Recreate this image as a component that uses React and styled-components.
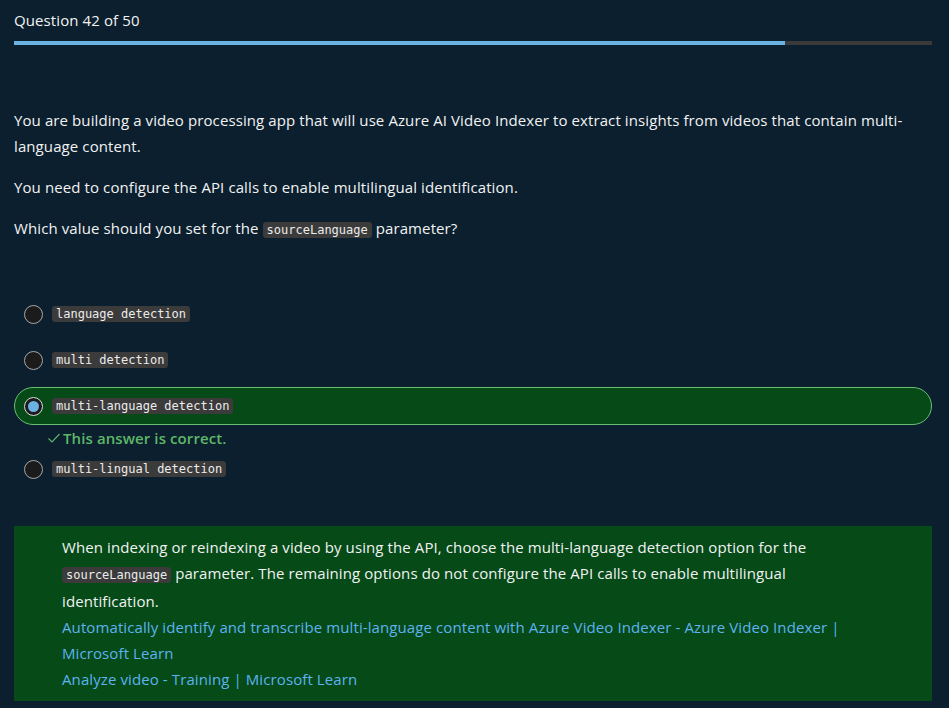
import styled, { createGlobalStyle } from "styled-components";

const GlobalStyle = createGlobalStyle`
  html, body {
    margin: 0;
    padding: 0;
    background: #0b1f2e;
  }
  body {
    font-family: "Open Sans", "Noto Sans", sans-serif;
    color: #f2f2f2;
    letter-spacing: 0.1px;
  }
`;

const Page = styled.div`
  padding: 0 17px 8px 14px;
`;

const Header = styled.div`
  font-size: 15px;
  line-height: 20px;
  padding-top: 10px;
`;

const Progress = styled.div`
  height: 4px;
  margin-top: 11px;
  background: #3a3a3a;
`;

const ProgressFill = styled.div`
  height: 100%;
  background: #6cb1e3;
`;

const Question = styled.div`
  margin-top: 62px;
  font-size: 15px;
  line-height: 26px;

  p {
    margin: 0 0 15px;
  }
`;

const Code = styled.code`
  font-family: "DejaVu Sans Mono", Consolas, monospace;
  font-size: 12px;
  letter-spacing: 0;
  background: #3b3b3b;
  color: #ececec;
  border-radius: 3px;
  padding: 1px 4px;
`;

const Options = styled.div`
  margin-top: 52px;
  display: flex;
  flex-direction: column;
`;

const Option = styled.label`
  display: flex;
  align-items: center;
  gap: 9px;
  height: 38px;
  box-sizing: border-box;
  padding-left: 9px;
  border-radius: 19px;
  border: 1px solid ${(p) => (p.$selected ? "#6dbe73" : "transparent")};
  background: ${(p) => (p.$selected ? "#054a17" : "transparent")};
  margin-bottom: ${(p) => (p.$feedback ? "0" : "8px")};
`;

const Radio = styled.span`
  width: 19px;
  height: 19px;
  box-sizing: border-box;
  border-radius: 50%;
  border: 1.5px solid ${(p) => (p.$checked ? "#d9d9d9" : "#a8a8a8")};
  background: #1b1b1b;
  display: flex;
  align-items: center;
  justify-content: center;
  flex-shrink: 0;

  &::after {
    content: "";
    display: ${(p) => (p.$checked ? "block" : "none")};
    width: 11px;
    height: 11px;
    border-radius: 50%;
    background: #6cb1e3;
  }
`;

const Feedback = styled.div`
  display: flex;
  align-items: center;
  gap: 2px;
  padding: 3px 0 2px 33px;
  line-height: 20px;
  font-size: 15px;
  font-weight: 600;
  color: #5cb868;
`;

const Explanation = styled.div`
  margin-top: 30px;
  background: #054a17;
  padding: 8px 48px 9px 48px;
  font-size: 15px;
  line-height: 26px;

  p {
    margin: 0;
  }
`;

const Link = styled.a`
  display: block;
  color: #5eb2ef;
  text-decoration: none;
`;

const options = [
  { text: "language detection" },
  { text: "multi detection" },
  { text: "multi-language detection", selected: true, correct: true },
  { text: "multi-lingual detection" },
];

export default function App() {
  return (
    <Page>
      <GlobalStyle />
      <Header>Question 42 of 50</Header>
      <Progress>
        <ProgressFill style={{ width: `${(42 / 50) * 100}%` }} />
      </Progress>

      <Question>
        <p>
          You are building a video processing app that will use Azure AI Video Indexer to extract
          insights from videos that contain multi-language content.
        </p>
        <p>You need to configure the API calls to enable multilingual identification.</p>
        <p>
          Which value should you set for the <Code>sourceLanguage</Code> parameter?
        </p>
      </Question>

      <Options>
        {options.map((o) => (
          <div key={o.text}>
            <Option $selected={o.selected} $feedback={o.correct}>
              <Radio $checked={o.selected} />
              <Code>{o.text}</Code>
            </Option>
            {o.correct && (
              <Feedback>
                <svg width="14" height="14" viewBox="0 0 14 14" fill="none">
                  <path d="M1.5 7.5 L5 11 L12.5 3" stroke="#5cb868" strokeWidth="1.1" />
                </svg>
                This answer is correct.
              </Feedback>
            )}
          </div>
        ))}
      </Options>

      <Explanation>
        <p>
          When indexing or reindexing a video by using the API, choose the multi-language detection
          option for the <Code>sourceLanguage</Code> parameter. The remaining options do not
          configure the API calls to enable multilingual identification.
        </p>
        <Link href="#">
          Automatically identify and transcribe multi-language content with Azure Video Indexer -
          Azure Video Indexer | Microsoft Learn
        </Link>
        <Link href="#">Analyze video - Training | Microsoft Learn</Link>
      </Explanation>
    </Page>
  );
}
